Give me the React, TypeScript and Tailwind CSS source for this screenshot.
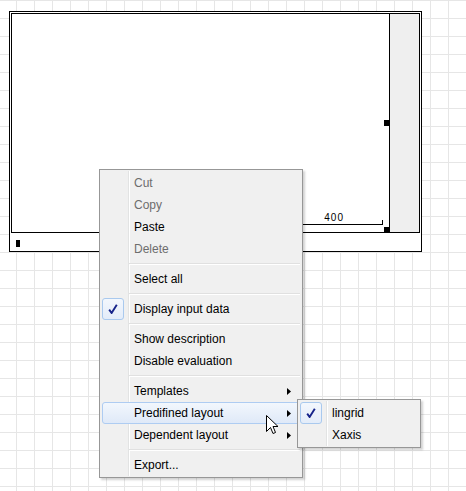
import React from "react";

type Item =
  | { kind: "sep" }
  | { kind: "item"; label: string; disabled?: boolean; checked?: boolean; sub?: boolean; active?: boolean };

const MENU: Item[] = [
  { kind: "item", label: "Cut", disabled: true },
  { kind: "item", label: "Copy", disabled: true },
  { kind: "item", label: "Paste" },
  { kind: "item", label: "Delete", disabled: true },
  { kind: "sep" },
  { kind: "item", label: "Select all" },
  { kind: "sep" },
  { kind: "item", label: "Display input data", checked: true },
  { kind: "sep" },
  { kind: "item", label: "Show description" },
  { kind: "item", label: "Disable evaluation" },
  { kind: "sep" },
  { kind: "item", label: "Templates", sub: true },
  { kind: "item", label: "Predifined layout", sub: true, active: true },
  { kind: "item", label: "Dependent layout", sub: true },
  { kind: "sep" },
  { kind: "item", label: "Export..." },
];

const SUBMENU: Item[] = [
  { kind: "item", label: "lingrid", checked: true },
  { kind: "item", label: "Xaxis" },
];

function Row({ item }: { item: Item }) {
  if (item.kind === "sep") {
    return (
      <div className="flex h-[8px] flex-col justify-center pl-[27px]">
        <div className="h-px bg-[#e0e0e0]" />
        <div className="h-px bg-white" />
      </div>
    );
  }
  return (
    <div
      className={`flex h-[22px] items-center rounded-[3px] border ${
        item.active
          ? "border-[#aeccf2] bg-[linear-gradient(to_bottom,#f2f7fd,#dfe9f8)]"
          : "border-transparent"
      }`}
    >
      {/* check slot */}
      <div
        className={`-m-px flex h-[22px] w-[22px] shrink-0 items-center justify-center rounded-[3px] border ${
          item.checked
            ? "border-[#a9c9ee] bg-[linear-gradient(to_bottom,#f3f7fd,#e3ecf9)]"
            : "border-transparent"
        }`}
      >
        {item.checked && (
          <svg width="10" height="10" viewBox="0 0 10 10">
            <path d="M1.2 5.6 L3.6 9 L8.8 0.8" fill="none" stroke="#16238a" strokeWidth="1.9" />
          </svg>
        )}
      </div>
      <span
        className={`ml-[11px] text-[12px] leading-none ${item.disabled ? "text-[#6d6d6d]" : "text-black"}`}
      >
        {item.label}
      </span>
      {item.sub && (
        <svg className="ml-auto mr-[8px]" width="4" height="7" viewBox="0 0 4 7">
          <path d="M0 0 L4 3.5 L0 7 Z" fill="#000" />
        </svg>
      )}
    </div>
  );
}

function Menu({ items, className }: { items: Item[]; className: string }) {
  return (
    <div
      className={`absolute border border-[#979797] bg-[#f0f0f0] px-[2px] pt-[2px] pb-px shadow-[2px_2px_2px_rgba(0,0,0,0.18)] ${className}`}
    >
      {/* gutter */}
      <div className="absolute left-[28px] top-px bottom-px w-px bg-[#e2e3e3]" />
      <div className="absolute left-[29px] top-px bottom-px w-px bg-white" />
      <div className="relative">
        {items.map((it, i) => (
          <Row key={i} item={it} />
        ))}
      </div>
    </div>
  );
}

export default function App() {
  return (
    <div
      className="relative h-[491px] w-[466px] overflow-hidden bg-white bg-[linear-gradient(to_right,#e6e6e6_1px,transparent_1px),linear-gradient(to_bottom,#e6e6e6_1px,transparent_1px)] bg-[size:18px_18px] bg-[position:16px_0] pt-[11px] pl-[9px]"
      style={{ fontFamily: '"Liberation Sans", Arial, sans-serif' }}
    >
      {/* diagram frame */}
      <div className="flex h-[241px] w-[413px] flex-col border border-black bg-white p-px">
        <div className="flex h-[220px] border border-black">
          <div className="flex flex-1 flex-col items-end">
            <div className="mt-[106px] h-[6px] w-[5px] bg-black" />
            <div className="mt-auto flex items-end pr-[6px]">
              <div className="flex flex-col items-end">
                <span className="mr-[38px] mb-[2px] text-[10px] leading-[8px] tracking-[1px] text-black">400</span>
                <div className="h-px w-[190px] bg-black" />
              </div>
              <div className="h-[5px] w-px bg-black" />
            </div>
            <div className="mt-[2px] h-[5px] w-[5px] bg-black" />
          </div>
          <div className="w-[30px] border-l border-black bg-[#efefef]" />
        </div>
        <div className="flex-1 pl-[5px] pt-[7px]">
          <div className="h-[7px] w-[4px] bg-black" />
        </div>
      </div>

      {/* context menu */}
      <Menu items={MENU} className="left-[99px] top-[169px] w-[204px]" />
      <Menu items={SUBMENU} className="left-[297px] top-[399px] w-[124px]" />

      {/* mouse cursor */}
      <svg className="absolute left-[266px] top-[415px]" width="13" height="21" viewBox="0 0 13 21">
        <path
          d="M0.5 0.5 L0.5 16.5 L4.5 12.5 L7 18.5 L9.5 17.5 L7 11.5 L12 11.5 Z"
          fill="#fff"
          stroke="#000"
          strokeWidth="1"
          strokeLinejoin="round"
        />
      </svg>
    </div>
  );
}
